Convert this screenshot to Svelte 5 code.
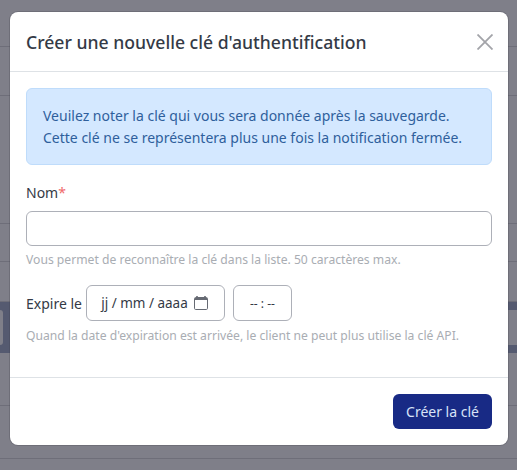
<script>
  let name = $state('');
  const rows = [47, 49, 128, 38, 40];
</script>

<div class="page">
  {#each rows as h}
    <div class="row" style="height: {h}px"></div>
  {/each}
  <div class="band">
    <span class="ghost"></span>
    <span class="ghost"></span>
  </div>
  <div class="row" style="height: 53px"></div>
  <div class="row" style="height: 53px"></div>
</div>

<div class="modal">
  <header class="head">
    <h5>Créer une nouvelle clé d'authentification</h5>
    <button class="close" aria-label="Fermer">
      <svg width="16" height="16" viewBox="0 0 16 16">
        <path d="M.5.5l15 15M15.500.5l-15 15" stroke="#a3a4a9" stroke-width="1.800" fill="none" />
      </svg>
    </button>
  </header>

  <div class="body">
    <div class="alert">
      Veuilez noter la clé qui vous sera donnée après la sauvegarde.<br />
      Cette clé ne se représentera plus une fois la notification fermée.
    </div>

    <label for="name">Nom<span class="req">*</span></label>
    <input id="name" class="field" type="text" bind:value={name} />
    <p class="hint">Vous permet de reconnaître la clé dans la liste. 50 caractères max.</p>

    <div class="expire">
      <span>Expire le</span>
      <div class="date">
        <span>jj / mm / aaaa</span>
        <svg width="14" height="14" viewBox="0 0 14 14">
          <path d="M3 0v2M11 0v2" stroke="#666a73" stroke-width="1.600" fill="none" />
          <rect x=".5" y="1.500" width="13" height="12" rx="1.200" stroke="#666a73" fill="none" />
          <path d="M1 2h12v2H1z" fill="#666a73" />
        </svg>
      </div>
      <div class="time">-- : --</div>
    </div>
    <p class="hint last">Quand la date d'expiration est arrivée, le client ne peut plus utilise la clé API.</p>
  </div>

  <footer class="foot">
    <button class="create">Créer la clé</button>
  </footer>
</div>

<style>
  :global(body) {
    margin: 0;
    background: #7f7f89;
    font-family: "Noto Sans", "Open Sans", sans-serif;
    overflow: hidden;
  }

  .page {
    height: 470px;
    overflow: hidden;
  }

  .row {
    box-sizing: border-box;
    border-bottom: 1px solid #6e6e79;
  }

  .band {
    height: 51px;
    box-sizing: border-box;
    background: #555a70;
    padding: 8px 0;
    display: flex;
    justify-content: space-between;
  }

  .ghost {
    width: 3px;
    background: #7f7f89;
    border-radius: 0 4px 4px 0;
  }

  .ghost:last-child {
    width: 20px;
    border-radius: 4px 0 0 4px;
  }

  .modal {
    position: absolute;
    left: 10px;
    top: 12px;
    width: 498px;
    height: 433px;
    display: flex;
    flex-direction: column;
    background: #fff;
    border-radius: 8px;
    box-shadow: 0 0 0 1px rgba(60, 60, 70, 0.25);
  }

  .head {
    height: 60px;
    box-sizing: border-box;
    padding: 0 15px 0 16px;
    display: flex;
    align-items: center;
    justify-content: space-between;
    border-bottom: 1px solid #dee2e6;
    flex: none;
  }

  h5 {
    margin: 0;
    font-size: 17.600px;
    font-weight: 500;
    color: #343a46;
  }

  .close {
    border: none;
    background: none;
    padding: 0;
    display: flex;
  }

  .body {
    flex: 1;
    padding: 16px 16px 0;
    font-size: 14px;
    color: #343a46;
  }

  .alert {
    box-sizing: border-box;
    height: 77px;
    padding: 16px;
    background: #d4e8ff;
    border: 1px solid #bfdcfb;
    border-radius: 6px;
    color: #2f5f9c;
    font-size: 14px;
    line-height: 22px;
    margin-bottom: 18px;
  }

  label {
    display: block;
    line-height: 20px;
    margin-bottom: 8px;
  }

  .req {
    color: #f06a6a;
  }

  .field {
    display: block;
    box-sizing: border-box;
    width: 100%;
    height: 35px;
    border: 1px solid #adb0b8;
    border-radius: 6px;
    outline: none;
    font: inherit;
  }

  .hint {
    margin: 4px 0 0;
    font-size: 12.150px;
    line-height: 20px;
    color: #a9adb3;
  }

  .hint.last {
    margin-top: 5px;
  }

  .expire {
    display: flex;
    align-items: center;
    margin-top: 15px;
  }

  .date,
  .time {
    box-sizing: border-box;
    height: 36px;
    display: flex;
    align-items: center;
    justify-content: center;
    border: 1px solid #adb0b8;
    border-radius: 6px;
  }

  .date {
    width: 139px;
    gap: 6px;
    margin-left: 4px;
    font-size: 13.500px;
    padding-right: 2px;
  }

  .time {
    width: 59px;
    margin-left: 8px;
    font-size: 12px;
  }

  .foot {
    height: 68px;
    box-sizing: border-box;
    flex: none;
    border-top: 1px solid #dee2e6;
    padding: 16px;
    display: flex;
    justify-content: flex-end;
  }

  .create {
    width: 99px;
    height: 35px;
    border: none;
    border-radius: 6px;
    background: #182a85;
    color: #d8e4f8;
    font: inherit;
    font-size: 14px;
  }
</style>
